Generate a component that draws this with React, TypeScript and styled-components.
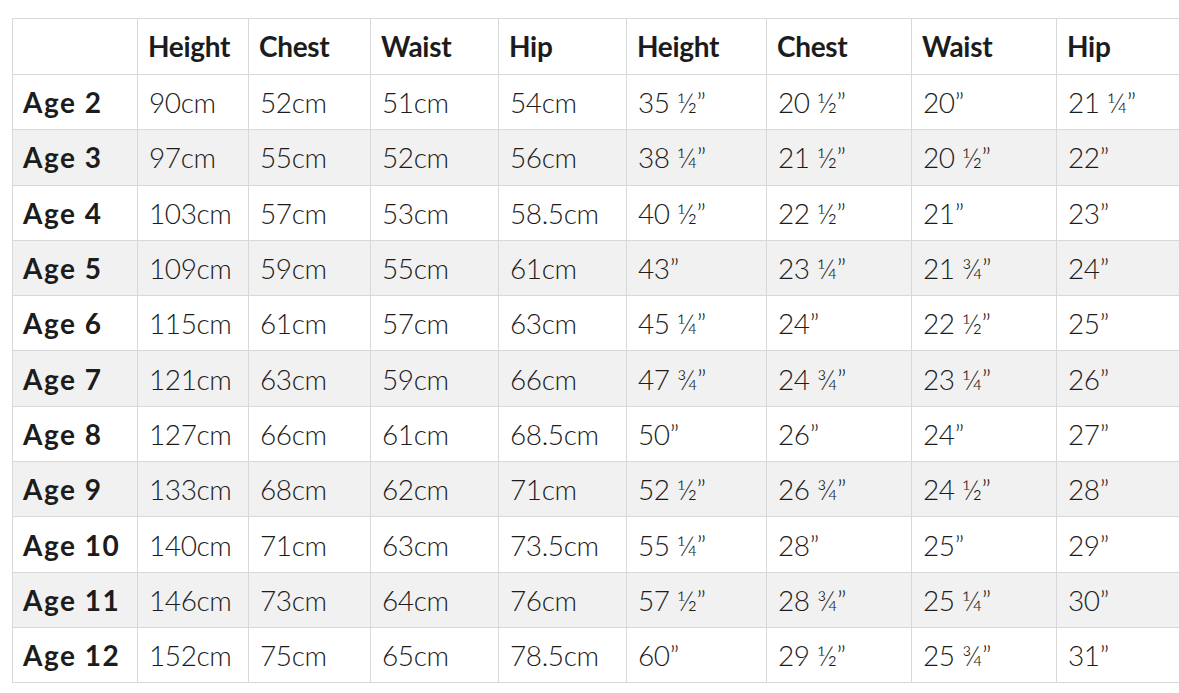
import React from 'react';
import styled, { createGlobalStyle } from 'styled-components';

const GlobalStyle = createGlobalStyle`
  html, body {
    margin: 0;
    padding: 0;
    background: #ffffff;
    overflow: hidden;
  }
  body {
    width: 1179px;
    height: 693px;
  }
`;

const Page = styled.div`
  padding: 18px 0 0 12px;
  width: 1179px;
  height: 693px;
  box-sizing: border-box;
  overflow: hidden;
`;

const Table = styled.table`
  border-collapse: collapse;
  table-layout: fixed;
  width: 1190px;
  font-family: Lato, 'Open Sans', sans-serif;
  color: #1c1c1c;
`;

const HeadCell = styled.th`
  height: 56px;
  padding: 0 0 2px 10px;
  border: 1px solid #d8d8d8;
  text-align: left;
  font-size: 28px;
  font-weight: 700;
  letter-spacing: -0.3px;
  box-sizing: border-box;
`;

interface IRowProps {
  shaded?: boolean;
}

const Row = styled.tr<IRowProps>`
  background: ${(props) => (props.shaded ? '#f1f1f1' : '#ffffff')};
`;

const LabelCell = styled.td`
  height: 55.3px;
  padding: 0 0 0 10px;
  border: 1px solid #d8d8d8;
  font-size: 28px;
  font-weight: 700;
  letter-spacing: 1.5px;
  white-space: nowrap;
  box-sizing: border-box;
`;

const ValueCell = styled.td`
  height: 55.3px;
  padding: 0 0 0 11px;
  border: 1px solid #d8d8d8;
  font-size: 28px;
  font-weight: 300;
  letter-spacing: -0.4px;
  white-space: nowrap;
  box-sizing: border-box;
`;

const widths = [125, 111, 122, 128, 128, 140, 145, 145, 146];
const headers = ['', 'Height', 'Chest', 'Waist', 'Hip', 'Height', 'Chest', 'Waist', 'Hip'];

const rows: string[][] = [
  ['Age 2', '90cm', '52cm', '51cm', '54cm', '35 ½”', '20 ½”', '20”', '21 ¼”'],
  ['Age 3', '97cm', '55cm', '52cm', '56cm', '38 ¼”', '21 ½”', '20 ½”', '22”'],
  ['Age 4', '103cm', '57cm', '53cm', '58.5cm', '40 ½”', '22 ½”', '21”', '23”'],
  ['Age 5', '109cm', '59cm', '55cm', '61cm', '43”', '23 ¼”', '21 ¾”', '24”'],
  ['Age 6', '115cm', '61cm', '57cm', '63cm', '45 ¼”', '24”', '22 ½”', '25”'],
  ['Age 7', '121cm', '63cm', '59cm', '66cm', '47 ¾”', '24 ¾”', '23 ¼”', '26”'],
  ['Age 8', '127cm', '66cm', '61cm', '68.5cm', '50”', '26”', '24”', '27”'],
  ['Age 9', '133cm', '68cm', '62cm', '71cm', '52 ½”', '26 ¾”', '24 ½”', '28”'],
  ['Age 10', '140cm', '71cm', '63cm', '73.5cm', '55 ¼”', '28”', '25”', '29”'],
  ['Age 11', '146cm', '73cm', '64cm', '76cm', '57 ½”', '28 ¾”', '25 ¼”', '30”'],
  ['Age 12', '152cm', '75cm', '65cm', '78.5cm', '60”', '29 ½”', '25 ¾”', '31”'],
];

export default function App() {
  return (
    <Page>
      <GlobalStyle />
      <Table>
        <colgroup>
          {widths.map((w, i) => (
            <col key={i} style={{ width: w }} />
          ))}
        </colgroup>
        <thead>
          <tr>
            {headers.map((h, i) => (
              <HeadCell key={i}>{h}</HeadCell>
            ))}
          </tr>
        </thead>
        <tbody>
          {rows.map((r, i) => (
            <Row key={r[0]} shaded={i % 2 === 1}>
              <LabelCell>{r[0]}</LabelCell>
              {r.slice(1).map((v, j) => (
                <ValueCell key={j}>{v}</ValueCell>
              ))}
            </Row>
          ))}
        </tbody>
      </Table>
    </Page>
  );
}
